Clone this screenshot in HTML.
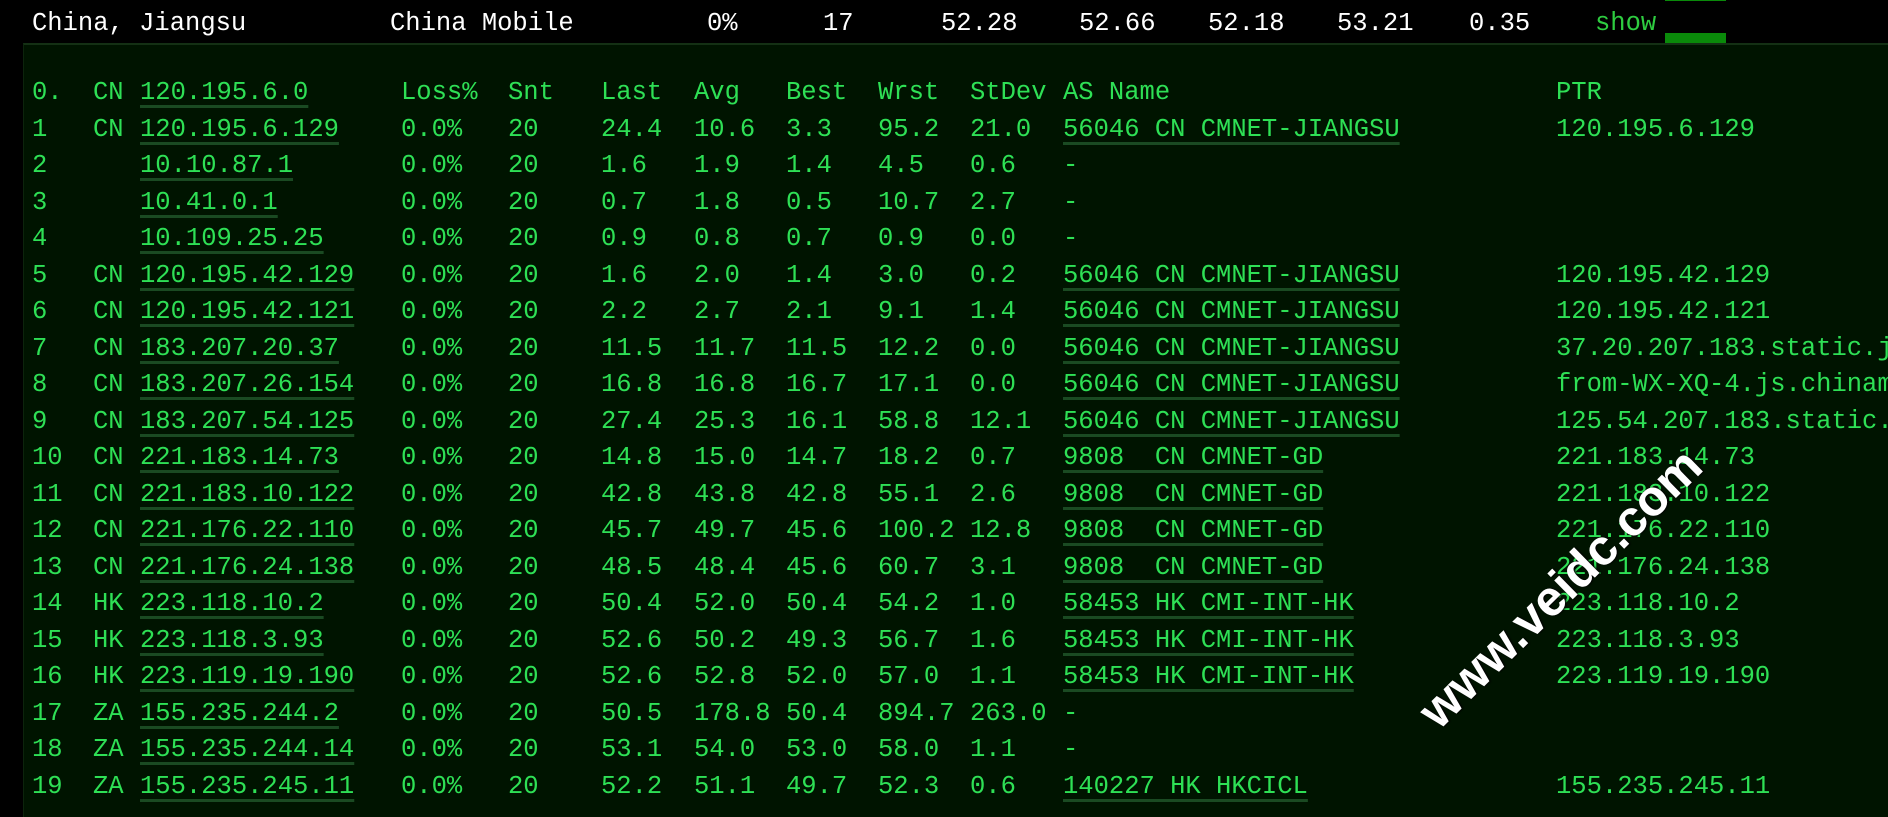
<!DOCTYPE html>
<html><head><meta charset="utf-8"><style>
html,body{margin:0;padding:0;width:1888px;height:817px;overflow:hidden;}
body{background:#000;position:relative;font-family:"Liberation Mono","DejaVu Sans Mono",monospace;font-size:25.5px;}
.wrap{position:absolute;left:0;top:0;width:1888px;height:817px;overflow:hidden;}
.h{position:absolute;top:8px;color:#fff;white-space:pre;line-height:32px;}
.panel{position:absolute;left:23px;top:43px;width:1865px;height:774px;background:#001400;border-top:2px solid #143014;border-left:1px solid #0c240c;box-sizing:border-box;}
.r{position:absolute;left:0;height:36px;width:1888px;overflow:hidden;}
.r span{position:absolute;top:0;line-height:36px;color:#2ee055;white-space:pre;}
.u{text-decoration:underline;text-decoration-color:#1a4a22;text-decoration-thickness:2.5px;text-underline-offset:6px;}
.c0{left:32px}.c1{left:93px}.c2{left:140px}.c3{left:401px}.c4{left:508px}.c5{left:601px}.c6{left:694px}.c7{left:786px}.c8{left:878px}.c9{left:970px}.c10{left:1063px}.c11{left:1556px}
.wm{position:absolute;left:1560px;top:588px;transform:translate(-50%,-50%) rotate(-44.5deg);color:#fff;font-family:"Liberation Sans","DejaVu Sans",sans-serif;font-weight:bold;font-size:50px;white-space:nowrap;text-shadow:1px 1px 2px #000;}
</style></head><body><div class="wrap">
<div class="h" style="left:32px">China, Jiangsu</div>
<div class="h" style="left:390px">China Mobile</div>
<div class="h" style="left:707px">0%</div>
<div class="h" style="left:823px">17</div>
<div class="h" style="left:941px">52.28</div>
<div class="h" style="left:1079px">52.66</div>
<div class="h" style="left:1208px">52.18</div>
<div class="h" style="left:1337px">53.21</div>
<div class="h" style="left:1469px">0.35</div>
<div class="h" style="left:1595px;color:#2ecc40">show</div>
<div style="position:absolute;left:1665px;top:0;width:61px;height:1px;background:#0a8a0a"></div>
<div style="position:absolute;left:1665px;top:33px;width:61px;height:10px;background:#0a8a0a"></div>
<div class="panel"></div>

<div class="r" style="top:75px"><span class="c0">0.</span><span class="c1">CN</span><span class="c2 u">120.195.6.0</span><span class="c3">Loss%</span><span class="c4">Snt</span><span class="c5">Last</span><span class="c6">Avg</span><span class="c7">Best</span><span class="c8">Wrst</span><span class="c9">StDev</span><span class="c10">AS Name</span><span class="c11">PTR</span></div>
<div class="r" style="top:111.5px"><span class="c0">1</span><span class="c1">CN</span><span class="c2 u">120.195.6.129</span><span class="c3">0.0%</span><span class="c4">20</span><span class="c5">24.4</span><span class="c6">10.6</span><span class="c7">3.3</span><span class="c8">95.2</span><span class="c9">21.0</span><span class="c10 u">56046 CN CMNET-JIANGSU</span><span class="c11">120.195.6.129</span></div>
<div class="r" style="top:148px"><span class="c0">2</span><span class="c2 u">10.10.87.1</span><span class="c3">0.0%</span><span class="c4">20</span><span class="c5">1.6</span><span class="c6">1.9</span><span class="c7">1.4</span><span class="c8">4.5</span><span class="c9">0.6</span><span class="c10">-</span></div>
<div class="r" style="top:184.5px"><span class="c0">3</span><span class="c2 u">10.41.0.1</span><span class="c3">0.0%</span><span class="c4">20</span><span class="c5">0.7</span><span class="c6">1.8</span><span class="c7">0.5</span><span class="c8">10.7</span><span class="c9">2.7</span><span class="c10">-</span></div>
<div class="r" style="top:221px"><span class="c0">4</span><span class="c2 u">10.109.25.25</span><span class="c3">0.0%</span><span class="c4">20</span><span class="c5">0.9</span><span class="c6">0.8</span><span class="c7">0.7</span><span class="c8">0.9</span><span class="c9">0.0</span><span class="c10">-</span></div>
<div class="r" style="top:257.5px"><span class="c0">5</span><span class="c1">CN</span><span class="c2 u">120.195.42.129</span><span class="c3">0.0%</span><span class="c4">20</span><span class="c5">1.6</span><span class="c6">2.0</span><span class="c7">1.4</span><span class="c8">3.0</span><span class="c9">0.2</span><span class="c10 u">56046 CN CMNET-JIANGSU</span><span class="c11">120.195.42.129</span></div>
<div class="r" style="top:294px"><span class="c0">6</span><span class="c1">CN</span><span class="c2 u">120.195.42.121</span><span class="c3">0.0%</span><span class="c4">20</span><span class="c5">2.2</span><span class="c6">2.7</span><span class="c7">2.1</span><span class="c8">9.1</span><span class="c9">1.4</span><span class="c10 u">56046 CN CMNET-JIANGSU</span><span class="c11">120.195.42.121</span></div>
<div class="r" style="top:330.5px"><span class="c0">7</span><span class="c1">CN</span><span class="c2 u">183.207.20.37</span><span class="c3">0.0%</span><span class="c4">20</span><span class="c5">11.5</span><span class="c6">11.7</span><span class="c7">11.5</span><span class="c8">12.2</span><span class="c9">0.0</span><span class="c10 u">56046 CN CMNET-JIANGSU</span><span class="c11">37.20.207.183.static.js</span></div>
<div class="r" style="top:367px"><span class="c0">8</span><span class="c1">CN</span><span class="c2 u">183.207.26.154</span><span class="c3">0.0%</span><span class="c4">20</span><span class="c5">16.8</span><span class="c6">16.8</span><span class="c7">16.7</span><span class="c8">17.1</span><span class="c9">0.0</span><span class="c10 u">56046 CN CMNET-JIANGSU</span><span class="c11">from-WX-XQ-4.js.chinamo</span></div>
<div class="r" style="top:403.5px"><span class="c0">9</span><span class="c1">CN</span><span class="c2 u">183.207.54.125</span><span class="c3">0.0%</span><span class="c4">20</span><span class="c5">27.4</span><span class="c6">25.3</span><span class="c7">16.1</span><span class="c8">58.8</span><span class="c9">12.1</span><span class="c10 u">56046 CN CMNET-JIANGSU</span><span class="c11">125.54.207.183.static.j</span></div>
<div class="r" style="top:440px"><span class="c0">10</span><span class="c1">CN</span><span class="c2 u">221.183.14.73</span><span class="c3">0.0%</span><span class="c4">20</span><span class="c5">14.8</span><span class="c6">15.0</span><span class="c7">14.7</span><span class="c8">18.2</span><span class="c9">0.7</span><span class="c10 u">9808  CN CMNET-GD</span><span class="c11">221.183.14.73</span></div>
<div class="r" style="top:476.5px"><span class="c0">11</span><span class="c1">CN</span><span class="c2 u">221.183.10.122</span><span class="c3">0.0%</span><span class="c4">20</span><span class="c5">42.8</span><span class="c6">43.8</span><span class="c7">42.8</span><span class="c8">55.1</span><span class="c9">2.6</span><span class="c10 u">9808  CN CMNET-GD</span><span class="c11">221.183.10.122</span></div>
<div class="r" style="top:513px"><span class="c0">12</span><span class="c1">CN</span><span class="c2 u">221.176.22.110</span><span class="c3">0.0%</span><span class="c4">20</span><span class="c5">45.7</span><span class="c6">49.7</span><span class="c7">45.6</span><span class="c8">100.2</span><span class="c9">12.8</span><span class="c10 u">9808  CN CMNET-GD</span><span class="c11">221.176.22.110</span></div>
<div class="r" style="top:549.5px"><span class="c0">13</span><span class="c1">CN</span><span class="c2 u">221.176.24.138</span><span class="c3">0.0%</span><span class="c4">20</span><span class="c5">48.5</span><span class="c6">48.4</span><span class="c7">45.6</span><span class="c8">60.7</span><span class="c9">3.1</span><span class="c10 u">9808  CN CMNET-GD</span><span class="c11">221.176.24.138</span></div>
<div class="r" style="top:586px"><span class="c0">14</span><span class="c1">HK</span><span class="c2 u">223.118.10.2</span><span class="c3">0.0%</span><span class="c4">20</span><span class="c5">50.4</span><span class="c6">52.0</span><span class="c7">50.4</span><span class="c8">54.2</span><span class="c9">1.0</span><span class="c10 u">58453 HK CMI-INT-HK</span><span class="c11">223.118.10.2</span></div>
<div class="r" style="top:622.5px"><span class="c0">15</span><span class="c1">HK</span><span class="c2 u">223.118.3.93</span><span class="c3">0.0%</span><span class="c4">20</span><span class="c5">52.6</span><span class="c6">50.2</span><span class="c7">49.3</span><span class="c8">56.7</span><span class="c9">1.6</span><span class="c10 u">58453 HK CMI-INT-HK</span><span class="c11">223.118.3.93</span></div>
<div class="r" style="top:659px"><span class="c0">16</span><span class="c1">HK</span><span class="c2 u">223.119.19.190</span><span class="c3">0.0%</span><span class="c4">20</span><span class="c5">52.6</span><span class="c6">52.8</span><span class="c7">52.0</span><span class="c8">57.0</span><span class="c9">1.1</span><span class="c10 u">58453 HK CMI-INT-HK</span><span class="c11">223.119.19.190</span></div>
<div class="r" style="top:695.5px"><span class="c0">17</span><span class="c1">ZA</span><span class="c2 u">155.235.244.2</span><span class="c3">0.0%</span><span class="c4">20</span><span class="c5">50.5</span><span class="c6">178.8</span><span class="c7">50.4</span><span class="c8">894.7</span><span class="c9">263.0</span><span class="c10">-</span></div>
<div class="r" style="top:732px"><span class="c0">18</span><span class="c1">ZA</span><span class="c2 u">155.235.244.14</span><span class="c3">0.0%</span><span class="c4">20</span><span class="c5">53.1</span><span class="c6">54.0</span><span class="c7">53.0</span><span class="c8">58.0</span><span class="c9">1.1</span><span class="c10">-</span></div>
<div class="r" style="top:768.5px"><span class="c0">19</span><span class="c1">ZA</span><span class="c2 u">155.235.245.11</span><span class="c3">0.0%</span><span class="c4">20</span><span class="c5">52.2</span><span class="c6">51.1</span><span class="c7">49.7</span><span class="c8">52.3</span><span class="c9">0.6</span><span class="c10 u">140227 HK HKCICL</span><span class="c11">155.235.245.11</span></div>

<div class="wm">www.veidc.com</div>
</div></body></html>
